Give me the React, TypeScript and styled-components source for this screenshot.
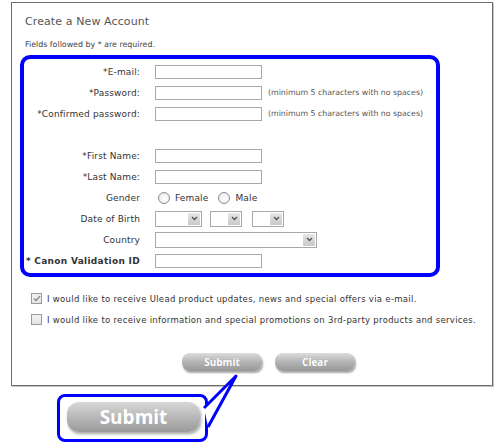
import React from "react";
import styled, { createGlobalStyle } from "styled-components";

const GlobalStyle = createGlobalStyle`
  html, body { margin: 0; padding: 0; background: #ffffff; }
  body { font-family: "DejaVu Sans", Verdana, sans-serif; color: #333; }
`;

const Page = styled.div`
  position: relative;
  width: 500px;
  height: 447px;
  padding: 2px 0 0 11px;
  box-sizing: border-box;
`;

const Panel = styled.div`
  width: 482px;
  height: 384px;
  box-sizing: border-box;
  border: 1px solid #6e6e6e;
  box-shadow: 1px 1px 0 #c4c4c4;
  padding: 12px 0 0 13px;
`;

const Title = styled.h1`
  margin: 0;
  font-size: 11px;
  line-height: 14px;
  font-weight: normal;
  color: #555;
  letter-spacing: 0.1px;
`;

const Note = styled.p`
  margin: 11px 0 0 0;
  font-size: 7.9px;
  line-height: 10px;
  color: #444;
`;

const FormBox = styled.div`
  margin: 5px 0 0 -5px;
  width: 420px;
  height: 222px;
  box-sizing: border-box;
  border: 4px solid #0000ff;
  border-radius: 10px;
  padding: 2px 0 0 0;
  display: grid;
  grid-template-columns: 116px 1fr;
  grid-auto-rows: 21px;
  column-gap: 15px;
  align-items: center;
`;

const Label = styled.div<{ $bold?: boolean }>`
  text-align: right;
  font-size: 9px;
  letter-spacing: ${(p) => (p.$bold ? "0.3px" : "0.15px")};
  font-weight: ${(p) => (p.$bold ? "bold" : "normal")};
  color: #333;
  white-space: nowrap;
`;

const Field = styled.div`
  display: flex;
  align-items: center;
  gap: 6px;
`;

const TextBox = styled.div<{ $w?: number }>`
  width: ${(p) => p.$w ?? 107}px;
  height: 14px;
  box-sizing: border-box;
  border: 1px solid #a8a8a8;
  background: #fff;
`;

const Hint = styled.span`
  font-size: 7.8px;
  color: #555;
  white-space: nowrap;
`;

const Spacer = styled.div`
  grid-column: 1 / span 2;
`;

const SelectBox = styled.div<{ $w: number; $ml?: number }>`
  width: ${(p) => p.$w}px;
  height: 16px;
  margin-left: ${(p) => p.$ml ?? 0}px;
  box-sizing: border-box;
  border: 1px solid #a8a8a8;
  background: #fff;
  display: flex;
  justify-content: flex-end;
  align-items: stretch;
  padding: 1px;
`;

const SelectArrow = styled.span`
  width: 12px;
  background: linear-gradient(#e6e6e6, #c8c8c8);
  display: flex;
  align-items: center;
  justify-content: center;
`;

const RadioGroup = styled.div`
  display: flex;
  align-items: center;
  font-size: 9px;
  letter-spacing: 0.15px;
  color: #333;
  padding-left: 3px;
`;

const Radio = styled.span`
  width: 10px;
  height: 10px;
  border-radius: 50%;
  border: 1px solid #8c8c8c;
  background: radial-gradient(circle at 60% 60%, #fff, #e4e4e4);
  margin-right: 5px;
`;

const RadioText = styled.span`
  margin-right: 10px;
`;

const CheckRow = styled.div<{ $mt: number }>`
  display: flex;
  align-items: center;
  height: 21px;
  margin: ${(p) => p.$mt}px 0 0 6px;
  gap: 5px;
  font-size: 8.5px;
  letter-spacing: 0.3px;
  color: #333;
  white-space: nowrap;
`;

const CheckBox = styled.span`
  width: 11px;
  height: 11px;
  box-sizing: border-box;
  border: 1px solid #9a9a9a;
  background: linear-gradient(#f4f4f4, #e2e2e2);
  display: flex;
  align-items: center;
  justify-content: center;
`;

const ButtonRow = styled.div`
  display: flex;
  gap: 13px;
  margin: 23px 0 0 157px;
`;

const PillButton = styled.div<{ $w: number }>`
  width: ${(p) => p.$w}px;
  height: 18px;
  border-radius: 8px;
  background: linear-gradient(#dcdcdc 0%, #b4b4b4 50%, #979797 100%);
  box-shadow: 1px 2px 2px rgba(0, 0, 0, 0.35);
  color: #fff;
  font-family: "Open Sans", "DejaVu Sans", sans-serif;
  font-weight: bold;
  font-size: 10px;
  display: flex;
  align-items: center;
  justify-content: center;
  text-shadow: 0 0 1px rgba(0, 0, 0, 0.2);
`;

const Callout = styled.div`
  position: absolute;
  left: 57px;
  top: 394px;
  width: 151px;
  height: 48px;
  box-sizing: border-box;
  border: 3px solid #0000ff;
  border-radius: 8px;
  padding: 5px 0 0 7px;
  background: #fff;
`;

const BigButton = styled.div`
  width: 133px;
  height: 30px;
  border-radius: 12px;
  background: linear-gradient(#d8d8d8 0%, #b8b8b8 50%, #9a9a9a 100%);
  box-shadow: 1px 2px 3px rgba(0, 0, 0, 0.35);
  color: #fff;
  font-family: "Open Sans", "DejaVu Sans", sans-serif;
  font-weight: bold;
  font-size: 19px;
  display: flex;
  align-items: center;
  justify-content: center;
`;

const Tail = styled.svg`
  position: absolute;
  left: 200px;
  top: 372px;
  overflow: visible;
`;

const Chevron = () => (
  <svg width="7" height="5" viewBox="0 0 7 5">
    <path d="M1 1 L3.5 3.5 L6 1" stroke="#555" strokeWidth="1.4" fill="none" />
  </svg>
);

const Select = ({ w, ml }: { w: number; ml?: number }) => (
  <SelectBox $w={w} $ml={ml}>
    <SelectArrow>
      <Chevron />
    </SelectArrow>
  </SelectBox>
);

const hint = "(minimum 5 characters with no spaces)";

export default function App() {
  return (
    <>
      <GlobalStyle />
      <Page>
        <Panel>
          <Title>Create a New Account</Title>
          <Note>Fields followed by * are required.</Note>
          <FormBox>
            <Label>*E-mail:</Label>
            <Field>
              <TextBox />
            </Field>
            <Label>*Password:</Label>
            <Field>
              <TextBox />
              <Hint>{hint}</Hint>
            </Field>
            <Label>*Confirmed password:</Label>
            <Field>
              <TextBox />
              <Hint>{hint}</Hint>
            </Field>
            <Spacer />
            <Label>*First Name:</Label>
            <Field>
              <TextBox />
            </Field>
            <Label>*Last Name:</Label>
            <Field>
              <TextBox />
            </Field>
            <Label>Gender</Label>
            <RadioGroup>
              <Radio />
              <RadioText>Female</RadioText>
              <Radio />
              <RadioText>Male</RadioText>
            </RadioGroup>
            <Label>Date of Birth</Label>
            <Field>
              <Select w={47} />
              <Select w={32} ml={2} />
              <Select w={32} ml={4} />
            </Field>
            <Label>Country</Label>
            <Field>
              <Select w={162} />
            </Field>
            <Label $bold>* Canon Validation ID</Label>
            <Field>
              <TextBox />
            </Field>
          </FormBox>
          <CheckRow $mt={11}>
            <CheckBox>
              <svg width="8" height="7" viewBox="0 0 8 7">
                <path d="M1 3.5 L3 5.5 L7 1" stroke="#8a8a8a" strokeWidth="1.3" fill="none" />
              </svg>
            </CheckBox>
            I would like to receive Ulead product updates, news and special offers via e-mail.
          </CheckRow>
          <CheckRow $mt={0}>
            <CheckBox />
            I would like to receive information and special promotions on 3rd-party products and services.
          </CheckRow>
          <ButtonRow>
            <PillButton $w={80}>Submit</PillButton>
            <PillButton $w={80}>Clear</PillButton>
          </ButtonRow>
        </Panel>
        <Callout>
          <BigButton>Submit</BigButton>
        </Callout>
        <Tail width="40" height="60" viewBox="0 0 40 60">
          <path
            d="M4 36 L36 4 L8 55"
            fill="#fff"
            stroke="#0000ff"
            strokeWidth="3"
            strokeLinejoin="round"
          />
        </Tail>
      </Page>
    </>
  );
}
